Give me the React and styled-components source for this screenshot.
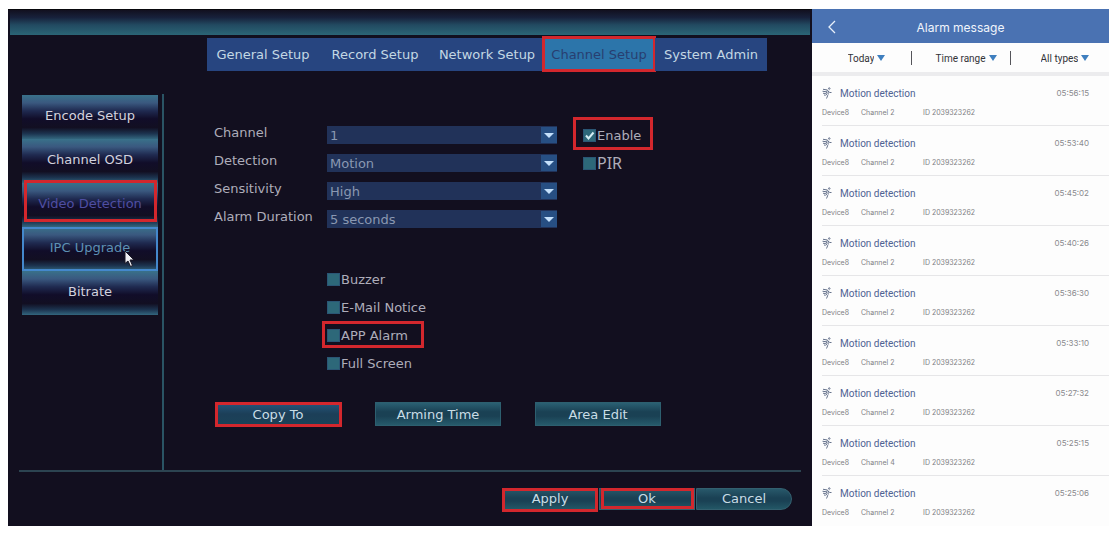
import { useState } from "react";
import styled, { createGlobalStyle, css } from "styled-components";

const tabs = ["General Setup", "Record Setup", "Network Setup", "Channel Setup", "System Admin"];

const menu = ["Encode Setup", "Channel OSD", "Video Detection", "IPC Upgrade", "Bitrate"];

const fields = [
    { id: "channel", label: "Channel", options: ["1", "2", "3", "4"] },
    { id: "detection", label: "Detection", options: ["Motion", "Human"] },
    { id: "sensitivity", label: "Sensitivity", options: ["High", "Middle", "Low"] },
    { id: "duration", label: "Alarm Duration", options: ["5 seconds", "10 seconds"] },
];

const notices = ["Buzzer", "E-Mail Notice", "APP Alarm", "Full Screen"];

const filters = ["Today", "Time range", "All types"];

const alarms = [
    { time: "05:56:15", channel: 2 },
    { time: "05:53:40", channel: 2 },
    { time: "05:45:02", channel: 2 },
    { time: "05:40:26", channel: 2 },
    { time: "05:36:30", channel: 2 },
    { time: "05:33:10", channel: 2 },
    { time: "05:27:32", channel: 2 },
    { time: "05:25:15", channel: 4 },
    { time: "05:25:06", channel: 2 },
];

function Check({ label, checked = false, marked, narrow }) {
    const [on, setOn] = useState(checked);

    return (
        <CheckLabel $narrow={narrow}>
            <CheckBox>
                <CheckInput type="checkbox" checked={on} onChange={() => setOn(!on)} />
                {on && (
                    <Tick viewBox="0 0 13 13">
                        <path d="M3 6.5 5.5 9.5 10.5 3.5" />
                    </Tick>
                )}
            </CheckBox>
            {label}
            {marked && <Mark $inset={marked} />}
        </CheckLabel>
    );
}

function MotionIcon() {
    return (
        <IconSvg viewBox="0 0 20 24">
            <circle cx="14.5" cy="3" r="1.5" />
            <path d="M2 4.5 11 6M1 8.5l8 1M2 12.5l5 .5M4 16l3.5.5" />
            <path d="M11 6 7.5 14l4 3-2.5 6" />
            <path d="M13.5 7.500 11.500 13l2.500 1.500" />
            <path d="M12.500 8.500l3 2.500h3.500" />
        </IconSvg>
    );
}

function Recorder() {
    return (
        <Monitor>
            <TitleStrip />
            <Tabs>
                {tabs.map((tab) => (
                    <Tab key={tab} type="button" $active={tab === "Channel Setup"}>
                        {tab}
                        {tab === "Channel Setup" && <Mark $inset="-2px -1px -1px -1px" />}
                    </Tab>
                ))}
            </Tabs>
            <Body>
                <Side>
                    {menu.map((item) => (
                        <SideItem
                            key={item}
                            type="button"
                            $active={item === "Video Detection"}
                            $hover={item === "IPC Upgrade"}
                        >
                            {item}
                            {item === "Video Detection" && <Mark $inset="-3px 1px 5px 2px" />}
                            {item === "IPC Upgrade" && (
                                <Pointer viewBox="0 0 10 16">
                                    <path d="M1 0v12.500l3-2.500 2.500 5.500 2-1-2.500-5.500h4z" />
                                </Pointer>
                            )}
                        </SideItem>
                    ))}
                </Side>
                <Content>
                    <Form>
                        {fields.map((field, index) => (
                            <Row key={field.id}>
                                <FieldLabel htmlFor={field.id}>{field.label}</FieldLabel>
                                <SelectBox>
                                    <Select id={field.id}>
                                        {field.options.map((option) => (
                                            <option key={option}>{option}</option>
                                        ))}
                                    </Select>
                                    <SelectArrow viewBox="0 0 16 16">
                                        <path d="M3 6h10l-5 5z" />
                                    </SelectArrow>
                                </SelectBox>
                                {index === 0 && (
                                    <Check label="Enable" checked marked="-11px -12px -8px -10px" />
                                )}
                                {index === 1 && <Check label="PIR" narrow />}
                            </Row>
                        ))}
                    </Form>
                    <Notices>
                        {notices.map((notice) => (
                            <Check
                                key={notice}
                                label={notice}
                                marked={notice === "APP Alarm" && "-7px -16px -6px -5px"}
                            />
                        ))}
                    </Notices>
                    <Actions>
                        <ActionButton type="button" $blue>
                            Copy To
                            <Mark $inset="-1px -2px -2px -1px" />
                        </ActionButton>
                        <ActionButton type="button">Arming Time</ActionButton>
                        <ActionButton type="button">Area Edit</ActionButton>
                    </Actions>
                </Content>
            </Body>
            <Footer>
                <FooterButton type="button">
                    Apply
                    <Mark $inset="-1px -1px -3px -1px" />
                </FooterButton>
                <FooterButton type="button">
                    Ok
                    <Mark $inset="-1px 0 0 1px" />
                </FooterButton>
                <FooterButton type="button" $round>
                    Cancel
                </FooterButton>
            </Footer>
        </Monitor>
    );
}

function AlarmList() {
    return (
        <Phone>
            <PhoneHeader>
                <Back type="button" aria-label="Back">
                    <svg width="8" height="14" viewBox="0 0 8 14">
                        <path d="M7 1 1 7l6 6" fill="none" stroke="#e8f0fb" strokeWidth="1.3" />
                    </svg>
                </Back>
                <PhoneTitle>Alarm message</PhoneTitle>
            </PhoneHeader>
            <Filters>
                {filters.map((filter) => (
                    <Filter key={filter}>
                        <FilterSelect aria-label={filter}>
                            <option>{filter}</option>
                        </FilterSelect>
                        <svg width="8" height="6" viewBox="0 0 8 6">
                            <path d="M0 0h8L4 6z" fill="#3f7fbf" />
                        </svg>
                    </Filter>
                ))}
            </Filters>
            <List>
                {alarms.map((alarm) => (
                    <Alarm key={alarm.time}>
                        <AlarmTop>
                            <MotionIcon />
                            <AlarmTitle>Motion detection</AlarmTitle>
                            <Time>{alarm.time}</Time>
                        </AlarmTop>
                        <Meta>
                            <span>Device8</span>
                            <span>Channel {alarm.channel}</span>
                            <span>ID 2039323262</span>
                        </Meta>
                    </Alarm>
                ))}
            </List>
        </Phone>
    );
}

function App() {
    return (
        <>
            <GlobalStyle />
            <Page>
                <Recorder />
                <AlarmList />
            </Page>
        </>
    );
}

const GlobalStyle = createGlobalStyle`
    * {
        box-sizing: border-box;
    }

    body {
        margin: 0;
        background: #ffffff;
    }

    button,
    select,
    input {
        margin: 0;
        padding: 0;
        border: 0;
        font: inherit;
        color: inherit;
        background: none;
    }
`;

const Page = styled.main`
    display: grid;
    grid-template-columns: minmax(0, 1fr) 297px;
    padding: 9px 11px 14px 8px;
`;

const Monitor = styled.section`
    font-family: "DejaVu Sans", sans-serif;
    font-size: 13px;
    color: #aeadba;

    background: #120f1f;
    border-top: 1px solid #08080c;
`;

const Mark = styled.span`
    position: absolute;
    inset: ${({ $inset }) => $inset};

    border: 3px solid #d3272d;
    pointer-events: none;
`;

const TitleStrip = styled.div`
    height: 25px;
    margin: 0 2px;

    background: linear-gradient(#12101f, #17213b 30%, #224a61 60%, #2b6576);
`;

const Tabs = styled.nav`
    width: 560px;
    max-width: calc(100% - 200px);
    margin: 3px 0 0 199px;

    display: grid;
    grid-template-columns: repeat(5, 1fr);
`;

const Tab = styled.button`
    position: relative;
    height: 33px;

    white-space: nowrap;
    color: ${({ $active }) => ($active ? "#283e70" : "#c3d8e4")};
    background: ${({ $active }) => ($active ? "#2c75aa" : "#274580")};
`;

const Body = styled.div`
    margin-top: 23px;

    display: flex;
`;

const Side = styled.nav`
    padding: 1px 4px 0 14px;

    display: flex;
    flex-direction: column;

    border-right: 2px solid #2a5464;
`;

const SideItem = styled.button`
    position: relative;
    width: 136px;
    height: 44px;
    padding-bottom: 4px;

    color: #d3d2de;
    background: linear-gradient(
        #39718a,
        #3a587f 18%,
        #1f2a50 36%,
        #110d29 54%,
        #120f22 74%,
        #1c3450 88%,
        #33667e
    );

    ${({ $active }) =>
        $active &&
        css`
            color: #4f4ea2;
        `}

    ${({ $hover }) =>
        $hover &&
        css`
            color: #5d91b3;
            box-shadow: inset 0 0 0 2px #4488cc;
        `}
`;

const Pointer = styled.svg`
    position: absolute;
    left: 102px;
    top: 24px;
    width: 10px;
    height: 16px;

    fill: #f0f0f4;
    stroke: #1a1826;
`;

const Content = styled.div`
    flex: 1;
    padding: 32px 0 45px 50px;
`;

const Form = styled.form`
    display: flex;
    flex-direction: column;
    gap: 10px;
`;

const Row = styled.div`
    height: 18px;

    display: grid;
    grid-template-columns: 113px minmax(0, 230px) auto;
    justify-content: start;
    align-items: center;

    & > :nth-child(3) {
        margin-left: 26px;
    }
`;

const FieldLabel = styled.label`
    padding-bottom: 4px;

    line-height: 14px;
    white-space: nowrap;
`;

const SelectBox = styled.div`
    position: relative;
    height: 18px;
`;

const Select = styled.select`
    appearance: none;
    width: 100%;
    height: 18px;
    padding: 0 20px 0 3px;

    color: #8a98b1;
    background: #213259;
`;

const SelectArrow = styled.svg`
    position: absolute;
    top: 1px;
    right: 0;
    width: 16px;
    height: 16px;

    fill: #c4e0fb;
    background: #274f83;
    pointer-events: none;
`;

const CheckLabel = styled.label`
    position: relative;
    height: 14px;

    display: flex;
    align-items: center;
    gap: 1px;

    white-space: nowrap;

    ${({ $narrow }) =>
        $narrow &&
        css`
            font-family: "Noto Sans", sans-serif;
            font-size: 16px;
        `}
`;

const CheckBox = styled.span`
    position: relative;
    width: 13px;
    height: 13px;
`;

const CheckInput = styled.input`
    appearance: none;
    display: block;
    width: 13px;
    height: 13px;

    background: #2d6879;
    border: 1px solid #2a5675;
`;

const Tick = styled.svg`
    position: absolute;
    inset: 0;

    fill: none;
    stroke: #d5eef4;
    stroke-width: 2;
    pointer-events: none;
`;

const Notices = styled.div`
    margin: 44px 0 0 113px;

    display: flex;
    flex-direction: column;
    align-items: flex-start;
    gap: 14px;
`;

const Actions = styled.div`
    margin: 33px 0 0 2px;

    display: flex;
    gap: 36px;
`;

const ActionButton = styled.button`
    position: relative;
    width: 124px;
    height: 22px;

    color: #c9dde6;
    background: ${({ $blue }) =>
        $blue
            ? "linear-gradient(#24567c, #1c3f58 50%, #1b4258)"
            : "linear-gradient(#2a6073, #1a4154 40%, #1a4154 60%, #265a6b)"};
    outline: 1px solid #2d5f6f;
`;

const Footer = styled.footer`
    margin: 0 11px;
    padding: 16px 9px;

    display: flex;
    justify-content: flex-end;
    gap: 1px;

    border-top: 2px solid #2c4451;
`;

const FooterButton = styled.button`
    position: relative;
    width: 96px;
    height: 22px;
    padding-bottom: 2px;

    color: #c9dde6;
    background: linear-gradient(#28586a, #1a4154 45%, #1a4154 60%, #235766);
    border: 1px solid #33606f;
    border-radius: ${({ $round }) => ($round ? "0 11px 11px 0" : "0")};
`;

const Phone = styled.section`
    font-family: Inter, sans-serif;

    background: #fdfdfd;
`;

const PhoneHeader = styled.header`
    height: 34px;
    padding: 2px 16px 0;

    display: grid;
    grid-template-columns: 8px 1fr 8px;
    align-items: center;

    color: #f1f5fc;
    background: #4a72b2;
`;

const Back = styled.button`
    display: flex;
`;

const PhoneTitle = styled.h1`
    margin: 0;

    font-size: 12px;
    font-weight: 400;
    text-align: center;
`;

const Filters = styled.div`
    height: 33px;
    padding: 8px 0 7px;

    display: grid;
    grid-template-columns: repeat(3, 1fr);

    border-bottom: 4px solid #ececee;
`;

const Filter = styled.div`
    padding-left: 10px;

    display: flex;
    align-items: center;
    justify-content: center;
    gap: 3px;

    font-family: Roboto, sans-serif;
    font-size: 10px;
    color: #333338;

    & + & {
        border-left: 1px solid #55555a;
    }
`;

const FilterSelect = styled.select`
    appearance: none;
    field-sizing: content;
`;

const List = styled.ul`
    margin: 0;
    padding: 0;

    list-style: none;
`;

const Alarm = styled.li`
    height: 50px;
    margin-left: 10px;
    padding: 10px 20px 0 0;

    border-bottom: 1px solid #e6e6e8;

    &:last-child {
        border-bottom: 0;
    }
`;

const AlarmTop = styled.div`
    height: 14px;

    display: flex;
    align-items: center;
`;

const IconSvg = styled.svg`
    width: 10px;
    height: 12px;
    margin-right: 8px;

    fill: none;
    stroke: #66738c;
    stroke-width: 2;
`;

const AlarmTitle = styled.span`
    font-family: Roboto, sans-serif;
    font-size: 10px;
    color: #4f6293;
`;

const Time = styled.time`
    margin-left: auto;

    font-size: 8px;
    color: #8a8a8e;
`;

const Meta = styled.div`
    margin-top: 8px;

    display: grid;
    grid-template-columns: 39px 62px 1fr;

    font-size: 7px;
    line-height: 10px;
    color: #808084;
`;

export default App;
